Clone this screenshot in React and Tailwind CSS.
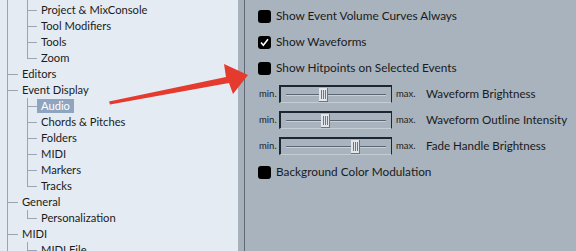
import React from "react";

const LINE = "border-[#9aa5b1]";

function Gutter({ last }) {
  return (
    <div className="flex w-[10px] flex-col self-stretch">
      <div className={`h-[9px] border-l border-b ${LINE}`} />
      <div className={`h-[7px] ${last ? "" : `border-l ${LINE}`}`} />
    </div>
  );
}

function Label({ children, selected }) {
  return (
    <span
      className={`flex h-[14px] items-center whitespace-nowrap px-[4px] leading-none ${
        selected ? "bg-[#8fa4bf] text-white" : "text-[#1b1b1b]"
      }`}
    >
      {children}
    </span>
  );
}

function TopRow({ children }) {
  return (
    <div className="flex h-4 items-center">
      <div className="flex h-4 w-[10px] flex-col">
        <div className={`h-[9px] border-b ${LINE}`} />
      </div>
      <Label>{children}</Label>
    </div>
  );
}

function Children({ items, selected, leadIn }) {
  return (
    <div className="ml-[19px] flex flex-col">
      {leadIn && <div className={`h-[2px] border-l ${LINE}`} />}
      {items.map((t, i) => (
        <div key={t} className="flex h-4 items-center">
          <Gutter last={i === items.length - 1} />
          <Label selected={t === selected}>{t}</Label>
        </div>
      ))}
    </div>
  );
}

function Check({ checked, label }) {
  return (
    <div className="flex h-[26px] items-center gap-[5px]">
      <div className="flex h-[13px] w-[13px] items-center justify-center rounded-[3px] bg-black">
        {checked && (
          <svg width="11" height="11" viewBox="0 0 11 11">
            <path d="M2 5.6 L4.3 8.3 L9 2.2" fill="none" stroke="white" strokeWidth="1.6" />
          </svg>
        )}
      </div>
      <span className="whitespace-nowrap text-[11.8px] text-[#1a1a1a]">{label}</span>
    </div>
  );
}

function Slider({ offset, label }) {
  return (
    <div className="flex h-[26px] items-center">
      <span className="w-[20px] pt-[1px] text-[9.5px] text-[#222]">min.</span>
      <div className="relative flex h-[18px] w-[113px] items-center border-t-2 border-l-2 border-r border-b border-[#1d2731] border-b-[#c4ccd4] px-[5px]">
        <div className="h-[2px] w-full border-t border-[#5a6673] border-b border-b-[#c8d0d8]" />
        <div
          className="absolute top-[1px] flex h-[14px] w-[9px] items-stretch justify-center gap-[1px] border-r border-b border-[#6b7580] bg-[#e2e6ea] px-[1px] py-[2px]"
          style={{ left: offset }}
        >
          <span className="w-px bg-[#6d7782]" />
          <span className="w-px bg-[#6d7782]" />
          <span className="w-px bg-[#6d7782]" />
        </div>
      </div>
      <span className="ml-[4px] w-[30px] pt-[1px] text-[9.5px] text-[#222]">max.</span>
      <span className="whitespace-nowrap text-[11.6px] text-[#1a1a1a]">{label}</span>
    </div>
  );
}

export default function App() {
  return (
    <div
      className="relative flex h-[251px] w-[576px] overflow-hidden bg-[#a8b3be]"
      style={{ fontFamily: 'Lato, "Noto Sans", sans-serif' }}
    >
      <div className="flex w-[238px] shrink-0 bg-[#e4ebf3] text-[11.2px]">
        <div className={`ml-[7px] flex flex-col border-l ${LINE}`}>
          <Children leadIn items={["Project & MixConsole", "Tool Modifiers", "Tools", "Zoom"]} />
          <TopRow>Editors</TopRow>
          <TopRow>Event Display</TopRow>
          <Children
            items={["Audio", "Chords & Pitches", "Folders", "MIDI", "Markers", "Tracks"]}
            selected="Audio"
          />
          <TopRow>General</TopRow>
          <Children items={["Personalization"]} />
          <TopRow>MIDI</TopRow>
          <Children items={["MIDI File"]} />
        </div>
      </div>
      <div className="w-[6px] shrink-0 bg-[#a6b1bc]" />
      <div className="w-px shrink-0 bg-[#5f6a76]" />
      <div className="flex flex-1 flex-col pl-[13px] pt-[3px]">
        <Check label="Show Event Volume Curves Always" />
        <Check checked label="Show Waveforms" />
        <Check label="Show Hitpoints on Selected Events" />
        <div className="pl-px">
          <Slider offset={38} label="Waveform Brightness" />
          <Slider offset={40} label="Waveform Outline Intensity" />
          <Slider offset={70} label="Fade Handle Brightness" />
        </div>
        <Check label="Background Color Modulation" />
      </div>
      <svg className="pointer-events-none absolute left-0 top-0" width="576" height="251">
        <polygon
          points="109,101.5 226,77 224,64 248,75 233,94 229,83 110,104.5"
          fill="#e53a2e"
        />
      </svg>
    </div>
  );
}
